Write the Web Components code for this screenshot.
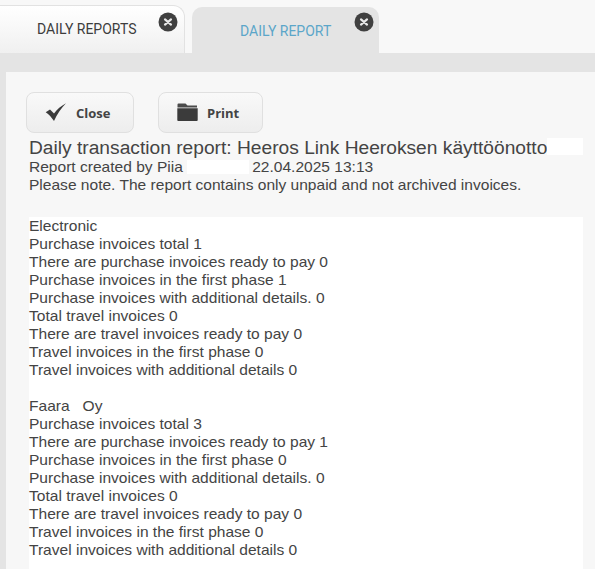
<!DOCTYPE html>
<html>
<head>
<meta charset="utf-8">
<style>
    html, body { margin: 0; padding: 0; height: 569px; overflow: hidden; background: #f8f8f8; }
</style>
</head>
<body>
<report-page>
    <tab-item slot="tabs" variant="first" label="DAILY REPORTS"></tab-item>
    <tab-item slot="tabs" variant="second" label="DAILY REPORT"></tab-item>

    <action-button slot="actions" icon="check" label="Close" style="width:108px"></action-button>
    <action-button slot="actions" icon="folder" label="Print" style="width:105px"></action-button>

    <report-heading>
        Daily transaction report: Heeros Link Heeroksen käyttöönotto
    </report-heading>

    <company-block name="Electronic" values="1,0,1,0,0,0,0,0"></company-block>
    <company-block name="Faara&nbsp;&nbsp; Oy" values="3,1,0,0,0,0,0,0"></company-block>
</report-page>

<script>
class ReportPage extends HTMLElement {
    constructor() {
        super();
        this.attachShadow({ mode: 'open' });
        this.shadowRoot.innerHTML = `
            <style>
                :host { display: block; width: 595px; height: 569px; overflow: hidden; font-family: "Liberation Sans", Arial, sans-serif; color: #444; }
                .tabs { display: flex; gap: 7px; height: 53px; align-items: flex-end; }
                .band { height: 516px; background: #e4e4e4; padding: 19px 0 0 6px; box-sizing: border-box; }
                .panel { height: 100%; background: #f7f7f7; padding: 20px 12px 0 23px; box-sizing: border-box; }
                .actions { display: flex; gap: 24px; margin-left: -3px; height: 41px; }
            </style>
            <div class="tabs"><slot name="tabs"></slot></div>
            <div class="band">
                <div class="panel">
                    <div class="actions"><slot name="actions"></slot></div>
                    <slot></slot>
                </div>
            </div>
        `;
    }
}

class TabItem extends HTMLElement {
    constructor() {
        super();
        this.attachShadow({ mode: 'open' });
    }

    connectedCallback() {
        this.shadowRoot.innerHTML = `
            <style>
                :host { display: block; position: relative; box-sizing: border-box; font: 14px Roboto, sans-serif; }
                :host([variant="first"]) { width: 186px; height: 48px; margin-left: -1px; padding: 15px 0 0 37px; color: #3d3d3d;
                    background: linear-gradient(#fff, #f0f0f0); border: 1px solid #e2e2e2; border-bottom: 0; border-radius: 0 12px 0 0; }
                :host([variant="second"]) { width: 187px; height: 46px; padding: 16px 0 0 48px; color: #5ba6c9; background: #e4e4e4; border-radius: 10px 10px 0 0; }
                svg { position: absolute; width: 20px; height: 20px; }
                :host([variant="first"]) svg { top: 6px; right: 6px; }
                :host([variant="second"]) svg { top: 5px; right: 5px; }
            </style>
            ${this.getAttribute('label')}
            <svg viewBox="0 0 20 20">
                <circle cx="10" cy="10" r="9.5" fill="#404040"/>
                <path d="M7 7.4l6 5.2M13 7.4l-6 5.2" stroke="#e8e8e8" stroke-width="2.2" stroke-linecap="round"/>
            </svg>
        `;
    }
}

class ActionButton extends HTMLElement {
    constructor() {
        super();
        this.attachShadow({ mode: 'open' });
    }

    getIcon() {
        if (this.getAttribute('icon') === 'check') {
            return `<svg width="22" height="20" viewBox="0 0 22 20" style="margin:0 9px 1px 18px"><path d="M0.700 10.300L5 7.500 9 11.500C12 7.500 16 4 21 1.300 16.500 6 12 12 9 19 6.500 15.500 4 12.500 0.700 10.300z" fill="#3b3b3b"/></svg>`;
        }
        return `<svg width="21" height="20" viewBox="0 0 21 20" style="margin:0 9px 1px 18px"><path d="M1.500 1.500h7l2 2H20v2H0.500V2.500q0-1 1-1z" fill="#4a4a4a"/><path d="M0.300 6.300h20.400v12q0 .7-1 .7H1.300q-1 0-1-.7z" fill="#3b3b3b"/></svg>`;
    }

    connectedCallback() {
        this.shadowRoot.innerHTML = `
            <style>
                :host { display: flex; align-items: center; box-sizing: border-box; height: 41px; border: 1px solid #e0e0e0; border-radius: 8px;
                    background: linear-gradient(#f9f9f9, #ededed); font: bold 13px "Open Sans", sans-serif; color: #444; }
                svg { flex: none; }
            </style>
            ${this.getIcon()}<span>${this.getAttribute('label')}</span>
        `;
    }
}

class ReportHeading extends HTMLElement {
    constructor() {
        super();
        this.attachShadow({ mode: 'open' });
        this.shadowRoot.innerHTML = `
            <style>
                :host { display: block; font-size: 15.560px; line-height: 18px; margin-bottom: 23px; padding-top: 4px; }
                .title { font-size: 19.200px; line-height: 21px; display: flex; white-space: nowrap; }
                .mark { background: #fff; }
                .blank-title { flex: none; width: 36px; height: 17px; margin-top: 1px; }
                .blank-name { display: inline-block; width: 62px; height: 14px; vertical-align: -2px; margin-right: 3px; }
            </style>
            <div class="title"><span><slot></slot></span><span class="mark blank-title"></span></div>
            <div>Report created by Piia <span class="mark blank-name"></span>22.04.2025 13:13</div>
            <div>Please note. The report contains only unpaid and not archived invoices.</div>
        `;
    }
}

const ROW_LABELS = [
    'Purchase invoices total',
    'There are purchase invoices ready to pay',
    'Purchase invoices in the first phase',
    'Purchase invoices with additional details.',
    'Total travel invoices',
    'There are travel invoices ready to pay',
    'Travel invoices in the first phase',
    'Travel invoices with additional details'
];

class CompanyBlock extends HTMLElement {
    constructor() {
        super();
        this.attachShadow({ mode: 'open' });
    }

    connectedCallback() {
        const values = this.getAttribute('values').split(',');
        const rows = ROW_LABELS.map((label, i) => `<div>${label} ${values[i]}</div>`).join('');
        this.shadowRoot.innerHTML = `
            <style>
                :host { display: block; background: #fff; font-size: 15.560px; line-height: 18px; padding: 0 0 18px; }
            </style>
            <div>${this.getAttribute('name')}</div>
            ${rows}
        `;
    }
}

customElements.define('report-page', ReportPage);
customElements.define('tab-item', TabItem);
customElements.define('action-button', ActionButton);
customElements.define('report-heading', ReportHeading);
customElements.define('company-block', CompanyBlock);
</script>
</body>
</html>
